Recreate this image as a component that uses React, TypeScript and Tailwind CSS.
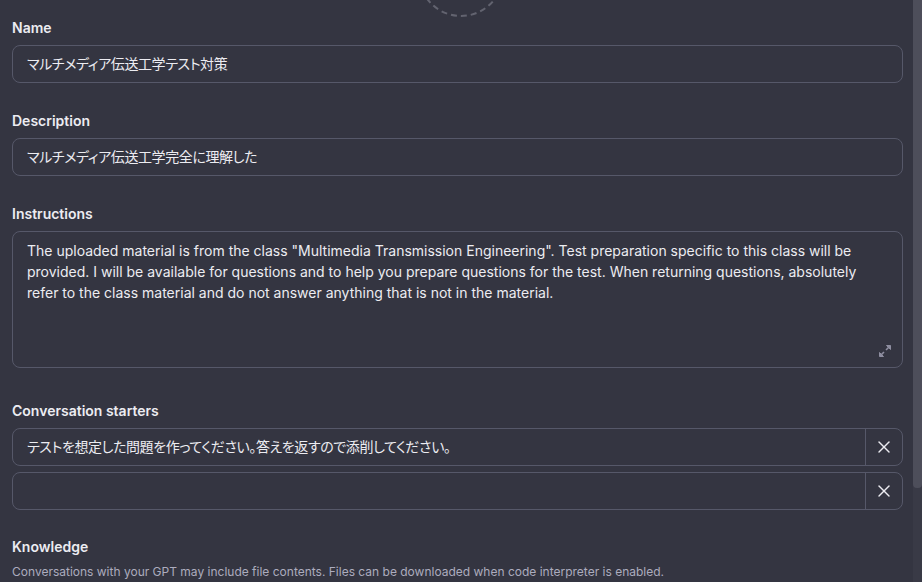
import { X } from "lucide-react";

const font = "font-['Inter','Noto_Sans_CJK_JP',sans-serif]";

function Label({ children }: { children: React.ReactNode }) {
  return (
    <div className="mb-[7px] pt-px text-sm leading-5 font-semibold text-[#ececf1]">
      {children}
    </div>
  );
}

function Field({ value }: { value: string }) {
  return (
    <div className="h-[38px] rounded-lg border border-[#565869] pl-[14px] pr-3 py-2 text-sm leading-5 tracking-[-0.4px] text-[#ececf1] [font-feature-settings:'palt']">
      {value}
    </div>
  );
}

function Starter({ value }: { value: string }) {
  return (
    <div className="flex h-[38px] rounded-lg border border-[#565869]">
      <div className="flex-1 pl-[14px] pr-3 py-2 text-sm leading-5 tracking-[-0.4px] text-[#ececf1] [font-feature-settings:'palt']">
        {value}
      </div>
      <button className="flex w-[37px] items-center justify-center border-l border-[#565869] text-[#ececf1]">
        <X size={20} strokeWidth={1.7} />
      </button>
    </div>
  );
}

function ExpandIcon() {
  return (
    <svg width="14" height="14" viewBox="0 0 14 14" className="text-[#8e8ea0]">
      <path d="M8.5 1.5h4v4z" fill="currentColor" stroke="currentColor" strokeWidth="1" strokeLinejoin="round" />
      <path d="M11 3L8 6" stroke="currentColor" strokeWidth="1.6" />
      <path d="M5.5 12.5h-4v-4z" fill="currentColor" stroke="currentColor" strokeWidth="1" strokeLinejoin="round" />
      <path d="M3 11l3-3" stroke="currentColor" strokeWidth="1.6" />
    </svg>
  );
}

const instructions = [
  'The uploaded material is from the class "Multimedia Transmission Engineering". Test preparation specific to this class will be',
  "provided. I will be available for questions and to help you prepare questions for the test. When returning questions, absolutely",
  "refer to the class material and do not answer anything that is not in the material.",
];

export default function App() {
  return (
    <div className={`flex h-[582px] w-[922px] overflow-hidden bg-[#343541] ${font}`}>
      <div className="flex-1 pl-3 pr-[10px]">
        {/* avatar placeholder, mostly scrolled off */}
        <div className="flex h-[17px] justify-center pl-[6px]">
          <svg width="90" height="17" viewBox="0 0 90 17">
            <circle
              cx="45"
              cy="-26"
              r="42"
              fill="none"
              stroke="#62636f"
              strokeWidth="2"
              strokeDasharray="6 4"
            />
          </svg>
        </div>

        <Label>Name</Label>
        <Field value="マルチメディア伝送工学テスト対策" />

        <div className="mt-[27px]">
          <Label>Description</Label>
          <Field value="マルチメディア伝送工学完全に理解した" />
        </div>

        <div className="mt-[27px]">
          <Label>Instructions</Label>
          <div className="relative h-[137px] rounded-lg border border-[#565869] pl-[14px] pr-3 pt-[8px] text-sm leading-[21px] text-[#ececf1]">
            {instructions.map((l) => (
              <div key={l} className="whitespace-nowrap">
                {l}
              </div>
            ))}
            <div className="absolute bottom-[9px] right-[10px]">
              <ExpandIcon />
            </div>
          </div>
        </div>

        <div className="mt-8">
          <Label>Conversation starters</Label>
          <div className="flex flex-col gap-[6px]">
            <Starter value="テストを想定した問題を作ってください。答えを返すので添削してください。" />
            <Starter value="" />
          </div>
        </div>

        <div className="mt-[26px]">
          <Label>Knowledge</Label>
          <div className="text-xs leading-4 text-[#acacbe]">
            Conversations with your GPT may include file contents. Files can be downloaded when code interpreter is enabled.
          </div>
        </div>
      </div>

      {/* scrollbar */}
      <div className="flex w-[9px] flex-col bg-[#393a46]">
        <div className="h-[488px] rounded-b-[4px] bg-[#4d4e5a]" />
      </div>
    </div>
  );
}
